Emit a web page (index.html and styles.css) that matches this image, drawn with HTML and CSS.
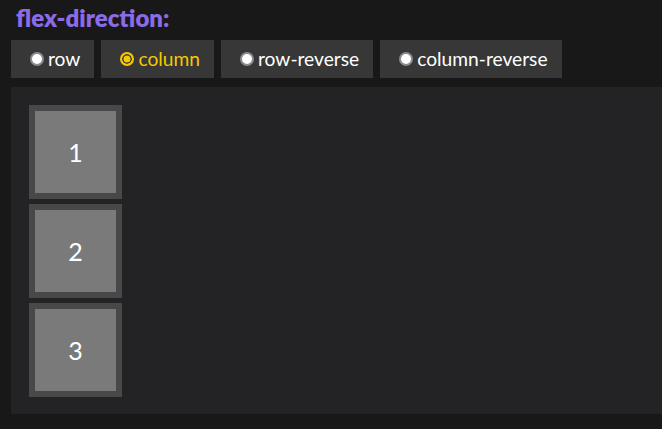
FILE: index.html
```html
<!DOCTYPE html>
<html>
<head>
<meta charset="utf-8">
<link rel="stylesheet" href="styles.css">
</head>
<body>
<div class="page">
  <h1 class="title">flex-direction:</h1>
  <div class="options">
    <label class="opt"><span class="radio"></span><span class="lbl">row</span></label>
    <label class="opt opt-active"><span class="radio radio-on"></span><span class="lbl">column</span></label>
    <label class="opt"><span class="radio"></span><span class="lbl">row-reverse</span></label>
    <label class="opt"><span class="radio"></span><span class="lbl">column-reverse</span></label>
  </div>
  <div class="stage">
    <div class="box">1</div>
    <div class="box">2</div>
    <div class="box">3</div>
  </div>
</div>
</body>
</html>
```
FILE: styles.css
```css
html, body {
  margin: 0;
  padding: 0;
  background: #181818;
}
.page {
  padding: 0 0 0 11px;
  font-family: "Lato", "Open Sans", sans-serif;
  overflow: hidden;
  height: 429px;
  box-sizing: border-box;
}
.title {
  margin: 0;
  padding: 4px 0 0 5px;
  height: 35px;
  box-sizing: border-box;
  font-size: 24px;
  font-weight: 800;
  color: #8b6be6;
  letter-spacing: 0;
  line-height: 28px;
}
.options {
  display: flex;
  gap: 7px;
  height: 38px;
  margin-top: 5px;
}
.opt {
  display: flex;
  align-items: center;
  background: #373737;
  padding: 0 14px 0 19px;
  color: #ffffff;
  font-size: 19.2px;
}
.opt-active {
  color: #f5c800;
}
.radio {
  width: 14px;
  height: 14px;
  border-radius: 50%;
  background: #ffffff;
  box-sizing: border-box;
  border: 2px solid #8a8a96;
  margin-right: 4px;
  flex: none;
}
.radio-on {
  background: #f5c800;
  border: 2px solid #f5c800;
  box-shadow: inset 0 0 0 1.5px #373737;
}
.lbl {
  line-height: 20px;
}
.stage {
  margin-top: 9px;
  background: #232325;
  height: 327px;
  box-sizing: border-box;
  padding: 18px;
  display: flex;
  flex-direction: column;
  gap: 5px;
}
.box {
  width: 81px;
  height: 82px;
  border: 6px solid #484848;
  background: #7a7a7a;
  color: #ffffff;
  font-size: 25px;
  display: flex;
  align-items: center;
  justify-content: center;
  flex: none;
}
```
